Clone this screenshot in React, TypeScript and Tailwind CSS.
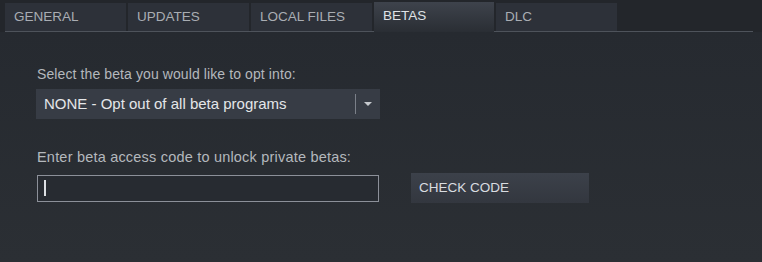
const tabs = ["GENERAL", "UPDATES", "LOCAL FILES", "BETAS", "DLC"];

function Tabs({ active }: { active: string }) {
  return (
    <div className="bg-[#23262b] pt-[3px] pl-[5px] pr-[9px]">
      <div className="flex h-[29px] items-end gap-[2px] border-b border-[#4e535b]">
        {tabs.map((t) => (
          <div
            key={t}
            className={
              t === active
                ? "relative -mb-px flex h-[30px] w-[120px] items-center pl-[9px] pb-px text-[#dfe2e6] bg-gradient-to-b from-[#3e434c] to-[#2a2e34]"
                : "flex h-[28px] w-[121px] items-center pl-[9px] text-[#a9adb3] bg-[#2d3139]"
            }
          >
            {t}
          </div>
        ))}
      </div>
    </div>
  );
}

export default function App() {
  return (
    <div
      className="h-[262px] w-[762px] overflow-hidden bg-[#2a2e34] text-[13.5px]"
      style={{ fontFamily: '"Liberation Sans", Arial, sans-serif' }}
    >
      <Tabs active="BETAS" />
      <div className="h-[230px] bg-gradient-to-b from-[#262a30] to-[#2b2f34] px-[36px] pt-[34px]">
        <div className="pl-[1px] text-[14px] leading-[16px] tracking-[0.1px] text-[#b4b8bd]">
          Select the beta you would like to opt into:
        </div>
        <div className="mt-[7px] flex h-[30px] w-[344px] items-center bg-[#373c45] text-[15px] text-[#e4e6e9]">
          <span className="flex-1 pl-[8px]">NONE - Opt out of all beta programs</span>
          <span className="h-[20px] w-px bg-[#7b8089]" />
          <span className="flex w-[24px] justify-center">
            <svg width="8" height="4" viewBox="0 0 8 4">
              <path d="M0 0H8L4 4Z" fill="#c6c9ce" />
            </svg>
          </span>
        </div>
        <div className="mt-[30px] pl-[1px] text-[14.5px] leading-[16px] tracking-[0.2px] text-[#b4b8bd]">
          Enter beta access code to unlock private betas:
        </div>
        <div className="mt-[8px] flex items-center gap-[32px]">
          <div className="ml-[1px] flex h-[27px] w-[342px] items-center border border-[#8c9099] bg-[#272b31] pl-[6px]">
            <span className="h-[16px] w-[2px] bg-[#dcdfe3]" />
          </div>
          <div className="flex h-[30px] w-[178px] items-center bg-gradient-to-b from-[#3c414a] to-[#33373f] pl-[8px] text-[#d9dce0]">
            CHECK CODE
          </div>
        </div>
      </div>
    </div>
  );
}
